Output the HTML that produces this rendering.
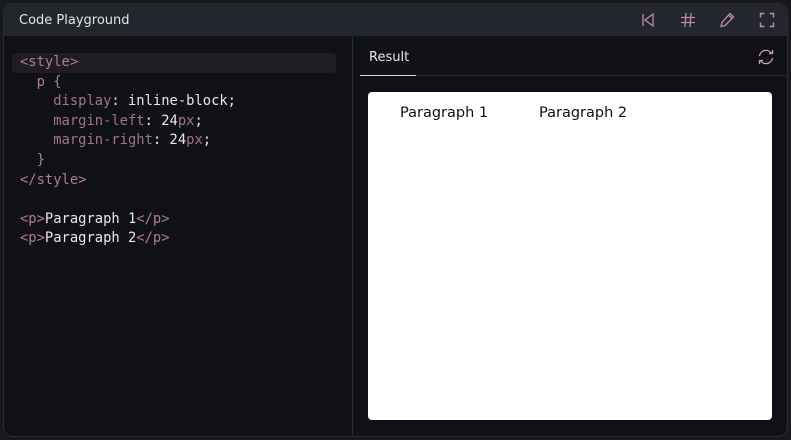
<!DOCTYPE html>
<html><head><style>
*{margin:0;padding:0;box-sizing:border-box}
body{width:791px;height:440px;background:#17191d;overflow:hidden;font-family:"DejaVu Sans","Liberation Sans",sans-serif}
.card{position:absolute;left:3px;top:3px;width:785px;height:434px;border:1px solid #2a2d33;border-radius:10px;background:#101115;overflow:hidden}
.hdr{position:absolute;left:0;top:0;right:0;height:32px;background:#23262d;}
.title{position:absolute;left:15px;top:9px;color:#e4e4e8;font-size:13px}
.ic{position:absolute;top:8px}
.code{position:absolute;left:8px;top:49px;width:324px;font-family:"DejaVu Sans Mono","Liberation Mono",monospace;font-size:13.8px;color:#e8e8ea}
.ln{height:19.6px;line-height:19.6px;padding-left:8px;white-space:pre}
.hl{background:#1f1d22;border-radius:4px}
.t{color:#b07a9c}.p{color:#a07390}
.div{position:absolute;left:348px;top:32px;bottom:0;width:1px;background:#2a2d33}
.tab{position:absolute;left:365px;top:46px;color:#e8e8ea;font-size:13px}
.tabl{position:absolute;left:356px;top:71px;right:0;height:1px;background:#2a2d33}
.tabu{position:absolute;left:356px;top:71px;width:56px;height:1px;background:#d8d8dc}
.res{position:absolute;left:364px;top:88px;width:404px;height:328px;background:#fff;border-radius:4px;color:#111;font-size:14.5px}
</style></head><body>
<div class="card">
<div class="hdr">
<div class="title">Code Playground</div>
<svg class="ic" style="left:636px" width="16" height="16" viewBox="0 0 16 16" fill="none" stroke="#c08aab" stroke-width="1.3"><path d="M3 2v12M13 2L5 8l8 6z"/></svg>
<svg class="ic" style="left:676px" width="16" height="16" viewBox="0 0 16 16" fill="none" stroke="#c08aab" stroke-width="1.3"><path d="M6 1L5 15M11 1l-1 14M1 5.5h14M1 10.5h14"/></svg>
<svg class="ic" style="left:715px" width="16" height="16" viewBox="0 0 16 16" fill="none" stroke="#c08aab" stroke-width="1.3"><path d="M11 1.5l3.5 3.5-8.5 8.5-4 1 1-4z M9.5 3l3.5 3.5"/></svg>
<svg class="ic" style="left:755px" width="16" height="16" viewBox="0 0 16 16" fill="none" stroke="#c08aab" stroke-width="1.5"><path d="M1.5 5.5v-4h4M10.5 1.5h4v4M14.5 10.5v4h-4M5.5 14.5h-4v-4"/></svg>
</div>
<div class="code">
<div class="ln hl"><span class="t">&lt;style&gt;</span></div>
<div class="ln">  <span class="t">p {</span></div>
<div class="ln">    <span class="p">display</span>: inline-block;</div>
<div class="ln">    <span class="p">margin-left</span>: 24<span class="p">px</span>;</div>
<div class="ln">    <span class="p">margin-right</span>: 24<span class="p">px</span>;</div>
<div class="ln">  <span class="t">}</span></div>
<div class="ln"><span class="t">&lt;/style&gt;</span></div>
<div class="ln"> </div>
<div class="ln"><span class="t">&lt;p&gt;</span>Paragraph 1<span class="t">&lt;/p&gt;</span></div>
<div class="ln"><span class="t">&lt;p&gt;</span>Paragraph 2<span class="t">&lt;/p&gt;</span></div>
</div>
<div class="div"></div>
<div class="tab">Result</div>
<div class="tabl"></div><div class="tabu"></div>
<svg style="position:absolute;left:753px;top:44px" width="18" height="18" viewBox="0 0 18 18" fill="none" stroke="#c9a0bb" stroke-width="1.3"><path d="M2.5 8a6.5 6.5 0 0 1 12-2.5M15.5 2v3.5H12M15.5 10a6.5 6.5 0 0 1-12 2.5M2.5 16v-3.5H6"/></svg>
<div class="res"><span style="position:absolute;left:32px;top:13px">Paragraph 1</span><span style="position:absolute;left:171px;top:13px">Paragraph 2</span></div>
</div>
</body></html>
